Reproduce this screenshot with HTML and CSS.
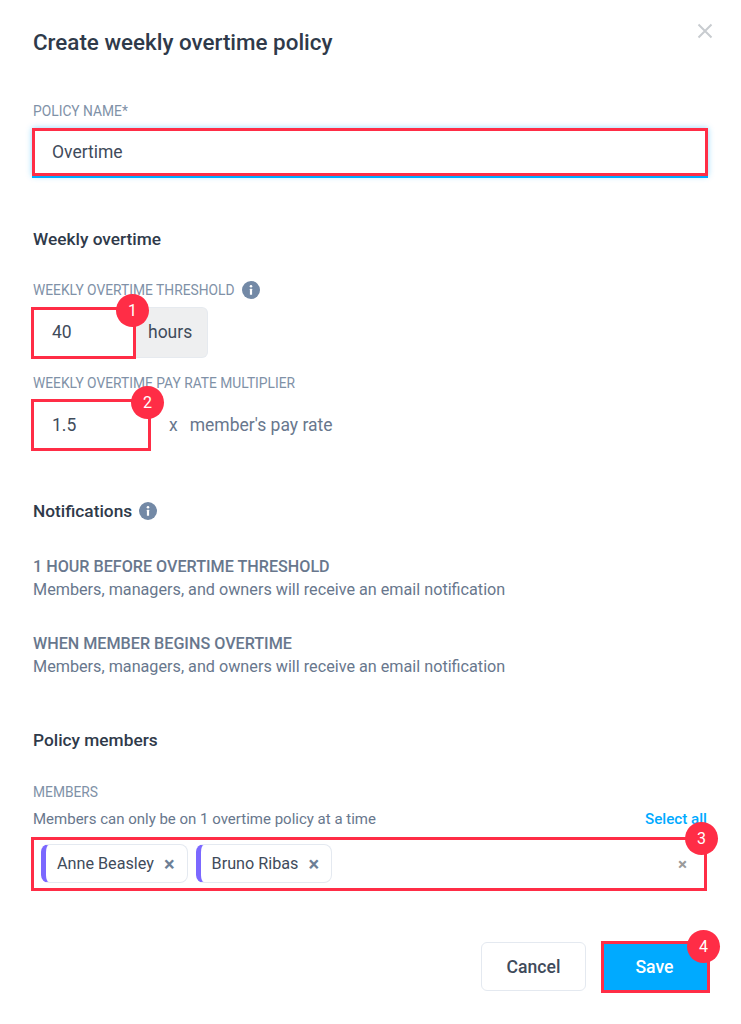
FILE: index.html
```html
<!DOCTYPE html>
<html lang="en">
  <head>
    <meta charset="UTF-8" />
    <meta name="viewport" content="width=device-width, initial-scale=1.0" />
    <title>Create weekly overtime policy</title>
    <link rel="stylesheet" href="styles.css">
  </head>
  <body>
    <div class="modal">
      <div class="modal-header">
        <h1>Create weekly overtime policy</h1>
        <svg class="close" viewBox="0 0 16 16" width="16" height="16">
          <path d="M1.5 1.5l13 13M14.5 1.5l-13 13" />
        </svg>
      </div>

      <!-- Policy name -->
      <label class="field-label name-label">POLICY NAME*</label>
      <div class="name-input">Overtime</div>

      <!-- Weekly overtime -->
      <h2 class="weekly-title">Weekly overtime</h2>
      <label class="field-label threshold-label">
        WEEKLY OVERTIME THRESHOLD
        <svg class="info" viewBox="0 0 18 18" width="18" height="18">
          <circle cx="9" cy="9" r="9" />
          <rect x="7.9" y="7.8" width="2.2" height="6" rx="0.4" />
          <circle cx="9" cy="5.2" r="1.3" />
        </svg>
      </label>
      <div class="input-row">
        <div class="marked-input hours-input">40<span class="badge badge-right">1</span></div>
        <div class="addon">hours</div>
      </div>
      <label class="field-label multiplier-label">WEEKLY OVERTIME PAY RATE MULTIPLIER</label>
      <div class="input-row rate-row">
        <div class="marked-input rate-input">1.5<span class="badge badge-right">2</span></div>
        <span class="rate-x">x</span>
        <span class="rate-text">member's pay rate</span>
      </div>

      <!-- Notifications -->
      <h2 class="notifications-title">
        Notifications
        <svg class="info" viewBox="0 0 18 18" width="18" height="18">
          <circle cx="9" cy="9" r="9" />
          <rect x="7.9" y="7.8" width="2.2" height="6" rx="0.4" />
          <circle cx="9" cy="5.2" r="1.3" />
        </svg>
      </h2>
      <div class="notice notice-first">
        <h3>1 HOUR BEFORE OVERTIME THRESHOLD</h3>
        <p>Members, managers, and owners will receive an email notification</p>
      </div>
      <div class="notice notice-second">
        <h3>WHEN MEMBER BEGINS OVERTIME</h3>
        <p>Members, managers, and owners will receive an email notification</p>
      </div>

      <!-- Members -->
      <h2 class="members-title">Policy members</h2>
      <label class="field-label members-label">MEMBERS</label>
      <div class="members-hint">
        <span>Members can only be on 1 overtime policy at a time</span>
        <a class="select-all">Select all</a>
      </div>
      <div class="members-input">
        <div class="chip">Anne Beasley<span class="chip-x">&times;</span></div>
        <div class="chip">Bruno Ribas<span class="chip-x">&times;</span></div>
        <span class="clear-x">&times;</span>
        <span class="badge badge-members">3</span>
      </div>

      <div class="actions">
        <button class="btn-cancel">Cancel</button>
        <button class="btn-save">Save<span class="badge badge-save">4</span></button>
      </div>
    </div>
  </body>
</html>
```

FILE: styles.css
```css
:root {
  --text-dark: #2f3a4a;
  --text-mid: #3f4b5b;
  --text-muted: #68778d;
  --label: #8091a7;
  --marker: #ff2d46;
  --blue: #00aaff;
}

body {
  margin: 0;
  background: #fff;
  font-family: Roboto, "Liberation Sans", sans-serif;
  color: var(--text-dark);
}

.modal {
  width: 674px;
  height: 1024px;
  padding: 0 34px 0 33px;
  overflow: hidden;
}

.modal-header {
  display: flex;
  justify-content: space-between;
  padding-top: 29px;
}

h1 {
  margin: 0;
  font-size: 22.4px;
  line-height: 26px;
  font-weight: 500;
}

.close {
  margin-top: -6px;
  margin-right: -6px;
  fill: none;
  stroke: #c8ccd0;
  stroke-width: 2;
}

h2 {
  margin: 0;
  font-size: 17.3px;
  line-height: 20px;
  font-weight: 500;
}

.field-label {
  display: flex;
  align-items: center;
  gap: 7px;
  font-size: 13.8px;
  line-height: 16px;
  color: var(--label);
}

.name-label {
  margin-top: 48px;
}

.name-input {
  box-sizing: border-box;
  height: 48px;
  margin: 9px -1px 0;
  padding-left: 17px;
  border: 3px solid var(--marker);
  box-shadow: 0 2px 0 #00aaff, 0 0 6px rgba(0, 170, 255, 0.45);
  font-size: 17.5px;
  line-height: 43px;
  color: var(--text-mid);
}

.weekly-title {
  margin-top: 53px;
}

.threshold-label {
  margin-top: 31px;
  height: 20px;
}

.info {
  fill: #fff;
}

.info circle:first-child {
  fill: #7389a6;
}

.input-row {
  display: flex;
  align-items: flex-start;
  margin-left: -2px;
  margin-top: 7px;
}

.rate-row {
  align-items: center;
  margin-top: 8px;
}

.marked-input {
  position: relative;
  box-sizing: border-box;
  height: 52px;
  padding-left: 18px;
  border: 3px solid var(--marker);
  background: #fff;
  font-size: 17.5px;
  line-height: 45px;
  color: var(--text-mid);
}

.hours-input {
  width: 105px;
}

.addon {
  width: 72px;
  height: 51px;
  padding-left: 12px;
  box-sizing: border-box;
  background: #eeeff0;
  border: 1px solid #e6eaef;
  border-left: 0;
  border-radius: 0 6px 6px 0;
  font-size: 17.5px;
  line-height: 48px;
  color: var(--text-mid);
}

.multiplier-label {
  margin-top: 16px;
}

.rate-input {
  width: 120px;
  line-height: 47px;
}

.rate-x {
  margin-left: 18px;
  font-size: 17.5px;
  color: var(--text-muted);
}

.rate-text {
  margin-left: 12px;
  font-size: 17.5px;
  color: var(--text-muted);
}

.badge {
  position: absolute;
  width: 33px;
  height: 33px;
  border-radius: 50%;
  background: var(--marker);
  color: #fff;
  font-size: 16px;
  font-weight: 400;
  line-height: 33px;
  text-align: center;
}

.badge-right {
  top: -16px;
  right: -16px;
}

.badge-members {
  top: -18px;
  right: -14px;
}

.badge-save {
  top: -14px;
  right: -13px;
}

.notifications-title {
  display: flex;
  align-items: center;
  gap: 7px;
  margin-top: 50px;
}

.notice h3 {
  margin: 0;
  font-size: 16.15px;
  line-height: 20px;
  font-weight: 500;
  color: var(--text-muted);
}

.notice p {
  margin: 3px 0 0;
  font-size: 16.2px;
  line-height: 20px;
  color: var(--text-muted);
}

.notice-first {
  margin-top: 36px;
}

.notice-second {
  margin-top: 34px;
}

.members-title {
  margin-top: 53px;
}

.members-label {
  margin-top: 34px;
}

.members-hint {
  display: flex;
  justify-content: space-between;
  margin-top: 10px;
  font-size: 15px;
  line-height: 18px;
  color: var(--text-muted);
}

.select-all {
  font-weight: 500;
  font-size: 15.2px;
  color: var(--blue);
}

.members-input {
  position: relative;
  display: flex;
  align-items: center;
  gap: 8px;
  box-sizing: border-box;
  height: 54px;
  margin: 9px 0 0 -2px;
  padding: 0 0 1px 7px;
  border: 3px solid var(--marker);
}

.chip {
  display: flex;
  justify-content: space-between;
  align-items: center;
  box-sizing: border-box;
  height: 39px;
  padding: 0 12px 0 11px;
  border: 1px solid #e4e9f0;
  border-left: 5px solid #7b68ff;
  border-radius: 8px;
  font-size: 16.2px;
  color: var(--text-mid);
}

.chip-x {
  margin-left: 10px;
  font-size: 20px;
  font-weight: 700;
  color: #6d7f96;
}

.clear-x {
  margin-left: auto;
  margin-right: 17px;
  font-size: 17px;
  font-weight: 700;
  color: #9a9a9a;
}

.actions {
  display: flex;
  justify-content: flex-end;
  align-items: flex-start;
  gap: 15px;
  margin: 50px -3px 0 0;
}

button {
  font-family: inherit;
  font-size: 17.6px;
  font-weight: 500;
  cursor: pointer;
}

.btn-cancel {
  width: 105px;
  height: 49px;
  margin-top: 1px;
  background: #fff;
  border: 1px solid #e4e9f0;
  border-radius: 6px;
  color: var(--text-mid);
}

.btn-save {
  position: relative;
  width: 109px;
  height: 52px;
  padding: 0 8px 0 6px;
  background: var(--blue);
  border: 3px solid var(--marker);
  color: #fff;
}
```
